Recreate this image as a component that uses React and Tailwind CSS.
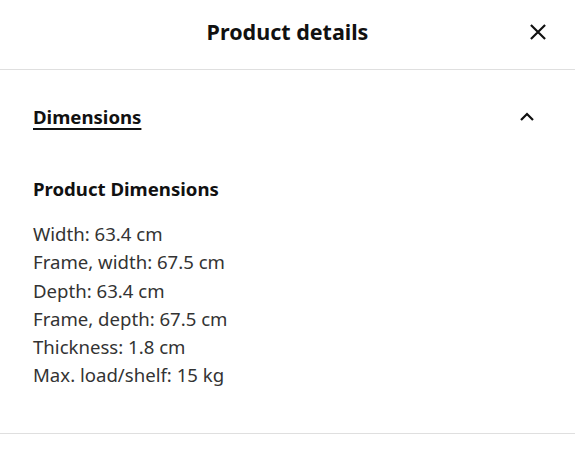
const DIMENSIONS = [
  'Width: 63.4 cm',
  'Frame, width: 67.5 cm',
  'Depth: 63.4 cm',
  'Frame, depth: 67.5 cm',
  'Thickness: 1.8 cm',
  'Max. load/shelf: 15 kg'
]

export default function App() {
  return (
    <div className="w-[575px] h-[452px] bg-white text-[#111111]" style={{ fontFamily: '"Noto Sans", sans-serif' }}>
      <div className="relative h-[70px] flex items-center justify-center border-b border-[#dfdfdf] pb-[6px]">
        <h1 className="text-[21.5px] font-bold leading-none">Product details</h1>
        <button className="absolute right-[27px] top-[22px] w-[20px] h-[20px]">
          <svg viewBox="0 0 24 24" className="w-[20px] h-[20px]" fill="none" stroke="#111111" strokeWidth={2.6}>
            <path d="M3.5 3.5l17 17M20.5 3.5l-17 17" />
          </svg>
        </button>
      </div>

      <div className="px-[33px] border-b border-[#dfdfdf] pb-[43px]">
        <div className="h-[94px] flex items-center justify-between pr-[6px]">
          <span className="text-[18.6px] font-bold underline underline-offset-[4px] decoration-[2px]">Dimensions</span>
          <svg viewBox="0 0 24 24" className="w-[18px] h-[18px]" fill="none" stroke="#111111" strokeWidth={3}>
            <path d="M4 16l8-8 8 8" />
          </svg>
        </div>
        <h2 className="text-[18.6px] font-bold leading-[26px] mt-[12px]">Product Dimensions</h2>
        <div className="mt-[18px] text-[18.6px] leading-[28.3px] text-[#333333]">
          {DIMENSIONS.map(line => (
            <div key={line}>{line}</div>
          ))}
        </div>
      </div>
    </div>
  )
}
